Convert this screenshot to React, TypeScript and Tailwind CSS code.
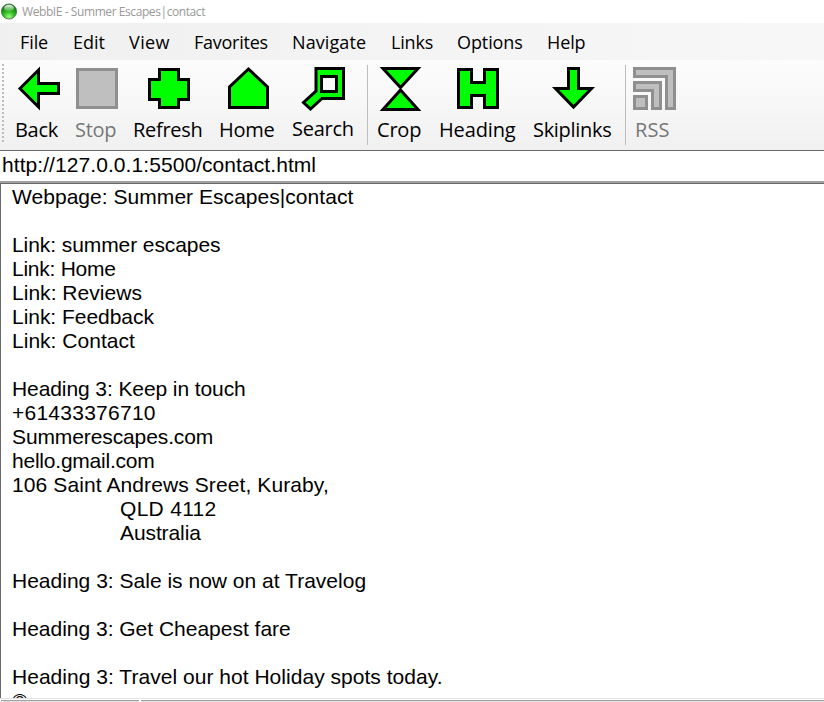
import type { ReactNode } from "react";

const menu = [
  { label: "File", cls: "w-[53px] tracking-[-0.1px]" },
  { label: "Edit", cls: "w-[56px] tracking-[0px]" },
  { label: "View", cls: "w-[65px] tracking-[0.4px]" },
  { label: "Favorites", cls: "w-[98px] tracking-[-0.25px]" },
  { label: "Navigate", cls: "w-[99px] tracking-[0.1px]" },
  { label: "Links", cls: "w-[66px] tracking-[-0.2px]" },
  { label: "Options", cls: "w-[90px] tracking-[-0.1px]" },
  { label: "Help", cls: "w-[60px] tracking-[-0.1px]" },
];

type ToolProps = {
  label: string;
  width: string;
  iconPad: string;
  textPad: string;
  box: string;
  disabled?: boolean;
  children: ReactNode;
};

function Tool({ label, width, iconPad, textPad, box, disabled, children }: ToolProps) {
  return (
    <button className={`flex h-[90px] shrink-0 flex-col items-start ${width}`}>
      <span className={`flex pt-[6px] ${iconPad}`}>
        <svg
          width="46"
          height="46"
          viewBox={box}
          fill={disabled ? "#bfbfbf" : "#00ff00"}
          stroke={disabled ? "#8f8f8f" : "#000"}
          strokeWidth="3"
        >
          {children}
        </svg>
      </span>
      <span className={`whitespace-nowrap text-[20px] leading-[36px] ${textPad} ${disabled ? "text-[#777]" : "text-black"}`}>
        {label}
      </span>
    </button>
  );
}

function Separator() {
  return <span className="mt-[5px] h-[80px] w-px shrink-0 bg-[#bdbdbd]" />;
}

const lines = [
  { text: "Webpage: Summer Escapes|contact", cls: "tracking-[0.04px]" },
  { text: "", cls: "" },
  { text: "Link: summer escapes", cls: "tracking-[-0.08px]" },
  { text: "Link: Home", cls: "tracking-[-0.25px]" },
  { text: "Link: Reviews", cls: "tracking-[0.03px]" },
  { text: "Link: Feedback", cls: "tracking-[-0.04px]" },
  { text: "Link: Contact", cls: "tracking-[0.02px]" },
  { text: "", cls: "" },
  { text: "Heading 3: Keep in touch", cls: "tracking-[-0.09px]" },
  { text: "+61433376710", cls: "tracking-[0.25px]" },
  { text: "Summerescapes.com", cls: "tracking-[-0.11px]" },
  { text: "hello.gmail.com", cls: "tracking-[-0.22px]" },
  { text: "106 Saint Andrews Sreet, Kuraby,", cls: "tracking-[0.1px]" },
  { text: "QLD 4112", cls: "pl-[108px] tracking-[0.3px]" },
  { text: "Australia", cls: "pl-[108px] tracking-[-0.1px]" },
  { text: "", cls: "" },
  { text: "Heading 3: Sale is now on at Travelog", cls: "tracking-[0.01px]" },
  { text: "", cls: "" },
  { text: "Heading 3: Get Cheapest fare", cls: "tracking-[-0.01px]" },
  { text: "", cls: "" },
  { text: "Heading 3: Travel our hot Holiday spots today.", cls: "tracking-[0.03px]" },
  { text: "©", cls: "" },
];

export default function App() {
  return (
    <div className="flex h-[702px] w-[824px] flex-col overflow-hidden bg-white font-['Open_Sans','Noto_Sans',sans-serif] text-black">
      <header className="flex h-[23px] shrink-0 items-center gap-[5px] pl-px">
        <svg width="16" height="18" viewBox="0 0 16 18">
          <defs>
            <radialGradient id="orb" cx="50%" cy="85%" r="75%">
              <stop offset="0" stopColor="#9dff88" />
              <stop offset="0.45" stopColor="#35bd24" />
              <stop offset="1" stopColor="#08760a" />
            </radialGradient>
            <linearGradient id="shine" x1="0" y1="0" x2="0" y2="1">
              <stop offset="0" stopColor="#fff" stopOpacity="0.95" />
              <stop offset="1" stopColor="#fff" stopOpacity="0.1" />
            </linearGradient>
          </defs>
          <circle cx="8" cy="8.5" r="7.6" fill="url(#orb)" stroke="#315c30" strokeWidth="0.7" />
          <ellipse cx="8" cy="5" rx="5" ry="3.3" fill="url(#shine)" />
        </svg>
        <span className="text-[12px] leading-[22px] tracking-[-0.42px] text-[#999]">WebbIE - Summer Escapes|contact</span>
      </header>
      <nav className="flex h-[37px] shrink-0 items-center bg-linear-to-r from-[#f0f0f0] to-[#f7f7f7] pl-5 text-[18px] leading-[37px]">
        {menu.map((m) => (
          <span key={m.label} className={`shrink-0 whitespace-nowrap pt-px ${m.cls}`}>{m.label}</span>
        ))}
      </nav>
      <div className="flex h-[90px] shrink-0 bg-linear-to-b from-[#fcfcfc] via-[#f7f7f7] to-[#f0f0f0]">
        <span className="ml-[2px] mt-[4px] h-[78px] w-[2px] shrink-0 bg-[repeating-linear-gradient(to_bottom,#bdbdbd_0px,#bdbdbd_2px,transparent_2px,transparent_4px)]" />
        <Tool label="Back" width="ml-[11px] w-[59px]" iconPad="pl-[1px]" textPad="pl-0 tracking-[-0.3px]" box="16 66 46 46">
          <path d="M20 88.5 38.5 70V83.5H58.5V93.5H38.5V107Z" />
        </Tool>
        <Tool label="Stop" disabled width="w-[58px]" iconPad="pl-0" textPad="pl-[1px] tracking-[-0.3px]" box="74 66 46 46">
          <path d="M77.500 69.500H116.500V107.500H77.500Z" />
        </Tool>
        <Tool label="Refresh" width="w-[86px]" iconPad="pl-[14px]" textPad="pl-px tracking-[-0.3px]" box="146 66 46 46">
          <path d="M159.500 69.500H178.500V79.500H188.500V99.500H178.500V107.500H159.500V99.500H149.500V79.500H159.500Z" />
        </Tool>
        <Tool label="Home" width="w-[73px]" iconPad="pl-[8px]" textPad="pl-px tracking-[-0.3px]" box="226 66 46 46">
          <path d="M229.500 107.500V87L248.500 69 267.500 87V107.500Z" />
        </Tool>
        <Tool label="Search" width="w-[76px]" iconPad="pl-[9px]" textPad="pl-px -mt-px tracking-[-0.25px]" box="300 66 46 46">
          <path d="M316 68.500H343.500V98.500H322L310.500 109 303.500 102.500 316 91Z" />
          <path d="M321.500 76.500H336.500V91.500H321.500Z" fill="#fafafa" />
        </Tool>
        <Separator />
        <Tool label="Crop" width="w-[70px]" iconPad="pl-[10px]" textPad="pl-[9px] tracking-[-0.2px]" box="378 66 46 46">
          <path d="M383 68.500H418L400.500 87.500ZM400.500 90 418 109.500H383Z" />
        </Tool>
        <Tool label="Heading" width="w-[95px]" iconPad="pl-[17px]" textPad="pl-px tracking-[-0.15px]" box="455 66 46 46">
          <path d="M458.500 69.500H471.500V82.500H484.500V69.500H497.500V107.500H484.500V95.500H471.500V107.500H458.500Z" />
        </Tool>
        <Tool label="Skiplinks" width="w-[92px]" iconPad="pl-[18px]" textPad="pl-0 tracking-[-0.3px]" box="551 66 46 46">
          <path d="M568.500 68.500H578.500V88.500H591.500L573.500 107 555.500 88.500H568.500Z" />
        </Tool>
        <Separator />
        <Tool label="RSS" disabled width="w-[60px]" iconPad="pl-[5px]" textPad="pl-[9px] tracking-[0.1px]" box="631 66 46 46">
          <path d="M634.500 68.500H674.500V108.500H666.500V76.500H634.500Z" />
          <path d="M634.500 82.500H660.500V108.500H652.500V90.500H634.500Z" />
          <path d="M634.500 96.500H646.500V108.500H634.500Z" />
        </Tool>
      </div>
      <div className="h-[31px] shrink-0 border-t border-[#696969] pl-[2px] font-['Liberation_Sans',Arial,sans-serif] text-[21px] leading-[28px] tracking-[0.07px]">
        http://127.0.0.1:5500/contact.html
      </div>
      <main className="h-[517px] shrink-0 overflow-hidden border-t-2 border-[#a0a0a0]">
        <div className="h-full overflow-hidden border-l border-t border-[#696969] pl-[11px] pt-px font-['Liberation_Sans',Arial,sans-serif] text-[21px] leading-[24px]">
          {lines.map((line, i) => (
            <p key={i} className={`h-6 whitespace-nowrap ${line.cls}`}>{line.text}</p>
          ))}
        </div>
      </main>
      <footer className="flex h-[4px] shrink-0 gap-[2px] border-t border-[#e3e3e3] pt-px">
        <span className="ml-px h-[2px] w-[138px] border-t border-[#a0a0a0] bg-[#e3e3e3]" />
        <span className="h-[2px] flex-1 border-t border-[#a0a0a0] bg-[#e3e3e3]" />
      </footer>
    </div>
  );
}
